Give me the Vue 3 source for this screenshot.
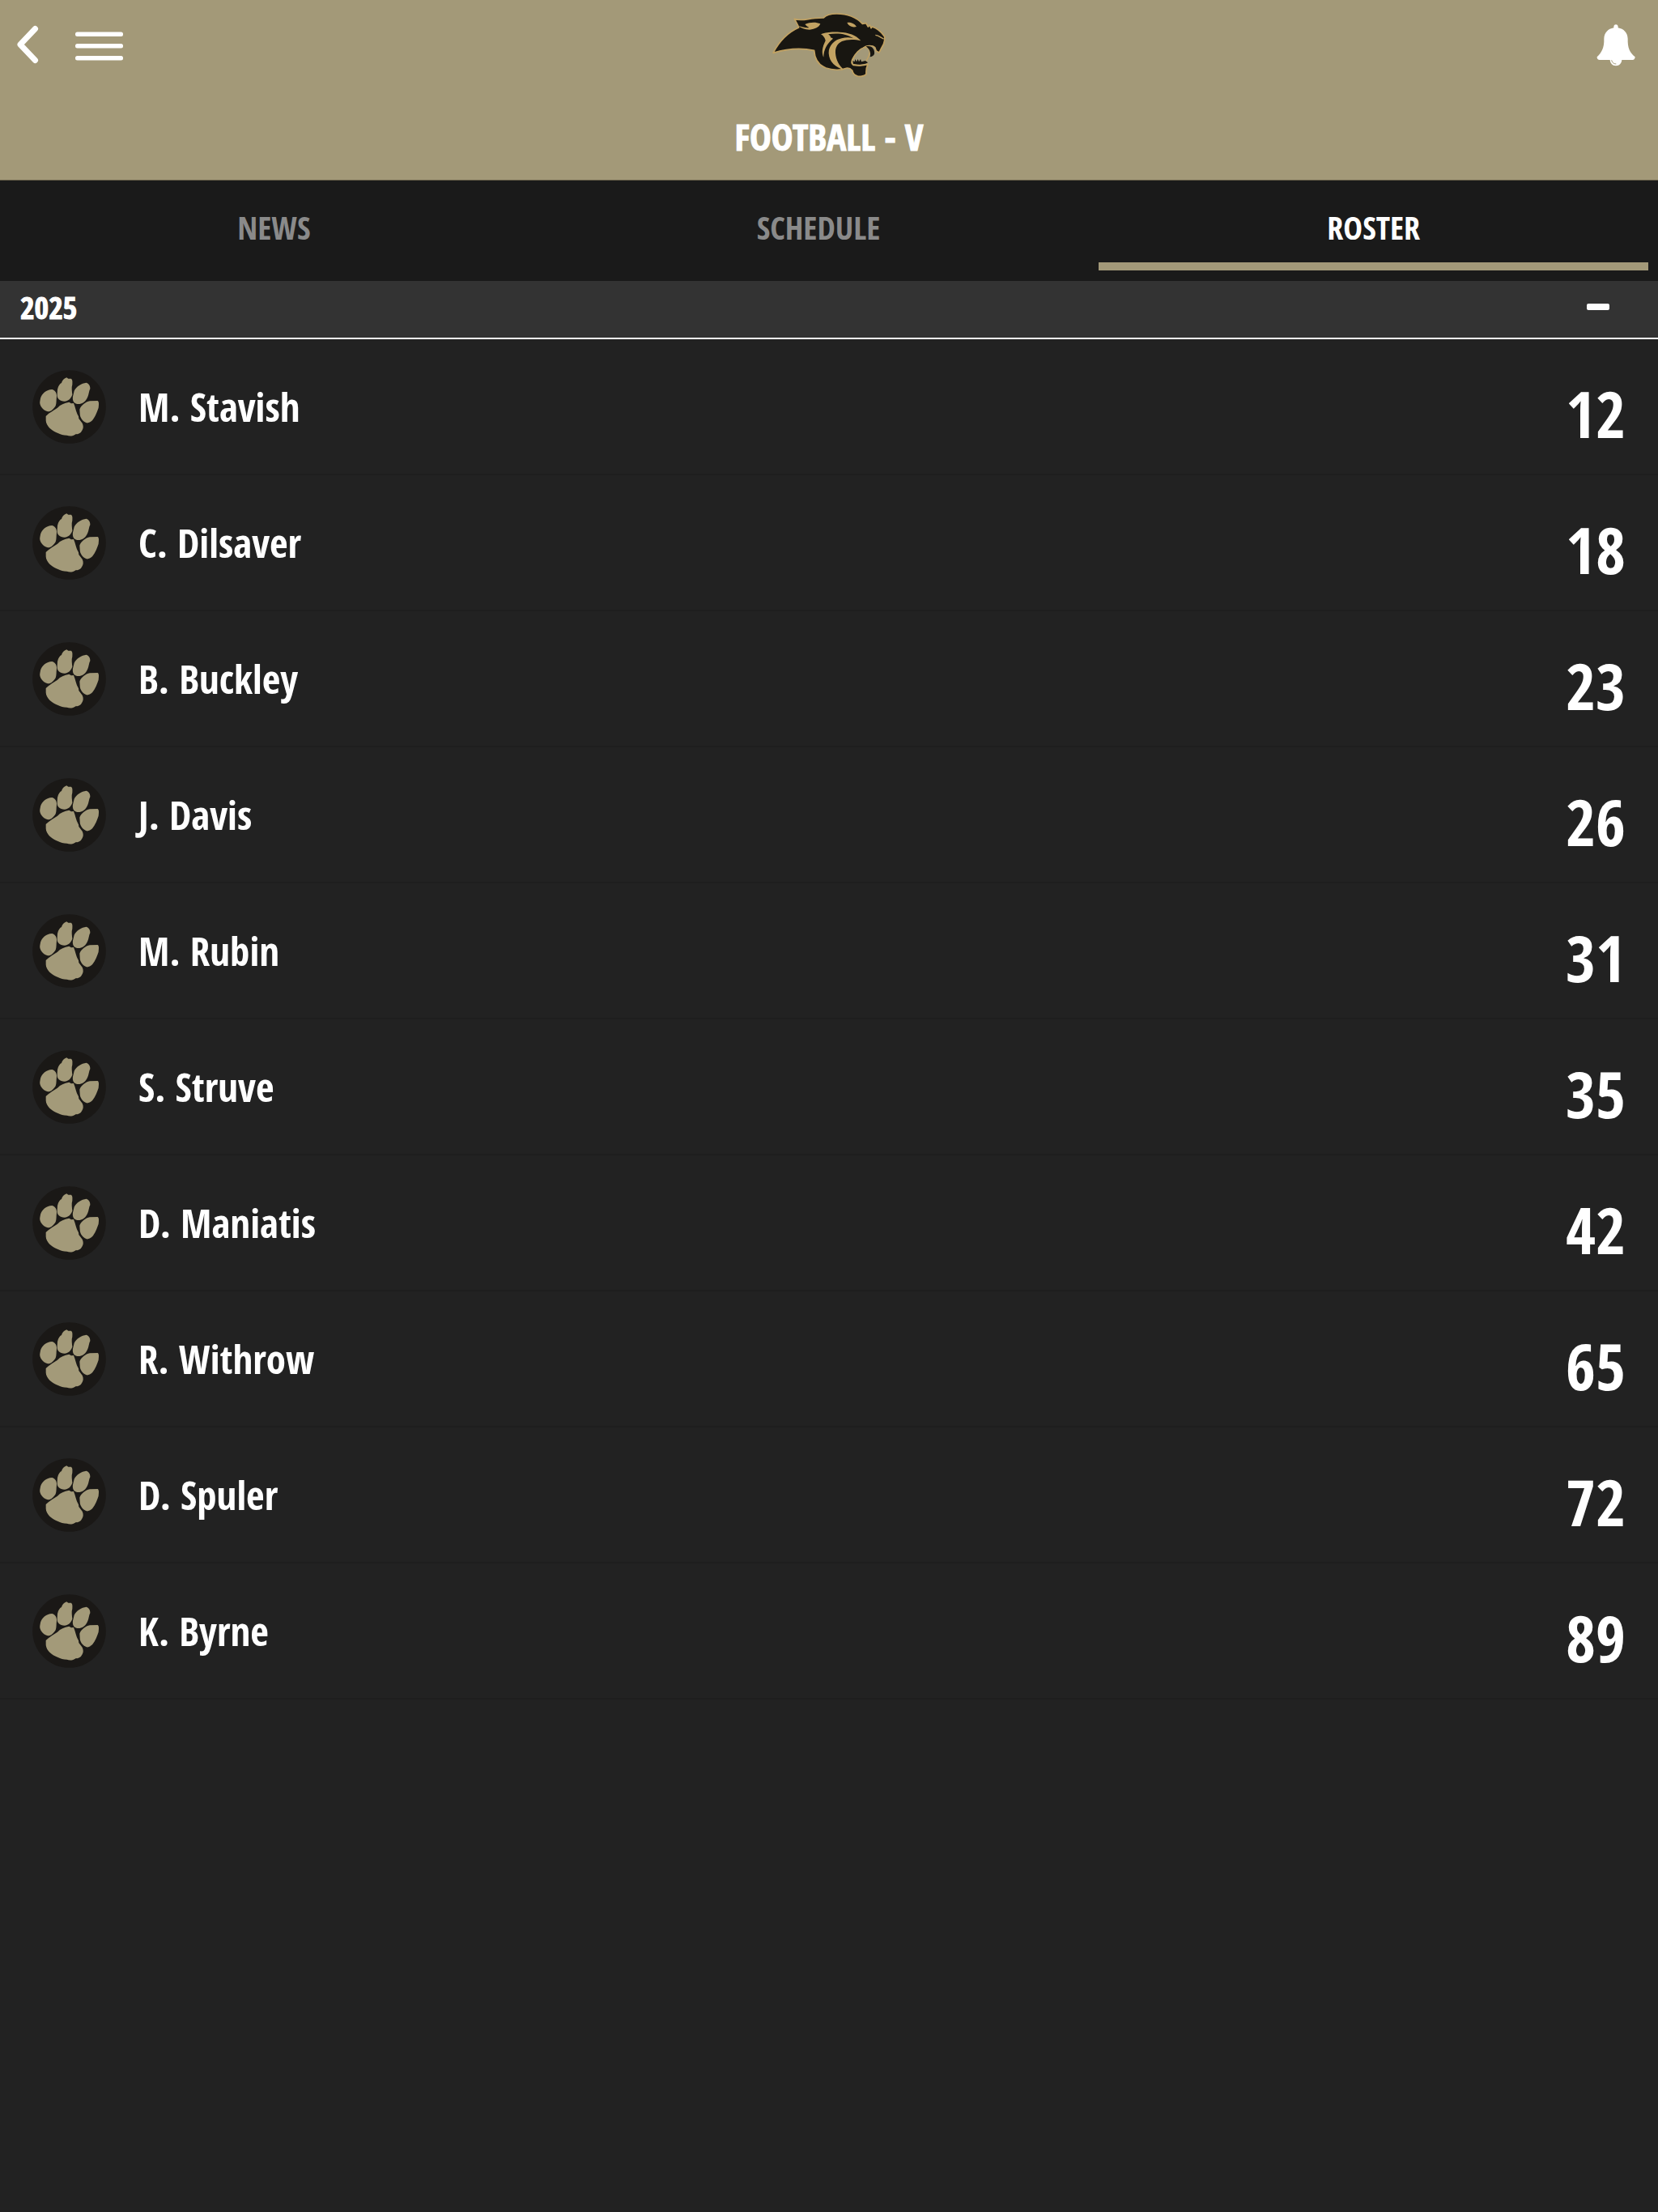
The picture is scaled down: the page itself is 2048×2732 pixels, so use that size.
<script setup>
import { ref } from 'vue'

const tabs = ['News', 'Schedule', 'Roster']
const activeTab = ref('Roster')
const open = ref(true)

const players = [
  { name: 'M. Stavish', number: 12 },
  { name: 'C. Dilsaver', number: 18 },
  { name: 'B. Buckley', number: 23 },
  { name: 'J. Davis', number: 26 },
  { name: 'M. Rubin', number: 31 },
  { name: 'S. Struve', number: 35 },
  { name: 'D. Maniatis', number: 42 },
  { name: 'R. Withrow', number: 65 },
  { name: 'D. Spuler', number: 72 },
  { name: 'K. Byrne', number: 89 },
]
</script>

<template>
  <div class="app">
    <header class="header">
      <div class="bar">
        <div class="side">
          <button type="button" aria-label="Back">
            <svg width="28" height="48" viewBox="0 0 28 48" fill="none" stroke="#fff" stroke-width="7" stroke-linecap="round" stroke-linejoin="round">
              <path d="M23.500 4.500L5 24L23.500 43.500" />
            </svg>
          </button>
          <button type="button" aria-label="Menu">
            <svg width="60" height="42" viewBox="0 0 60 42" fill="#fff">
              <rect x="0" y="5.500" width="59" height="5.500" rx="2.500" />
              <rect x="0" y="20" width="59" height="5.500" rx="2.500" />
              <rect x="0" y="35" width="59" height="5.500" rx="2.500" />
            </svg>
          </button>
        </div>
        <svg class="logo" viewBox="40 42 426 246" role="img" aria-label="Panthers">
          <path
            fill="#181611" stroke="#c2a262" stroke-width="5" stroke-linejoin="round"
            d="M46 196C66 158 96 122 141 102C137 90 130 80 125 70C140 76 158 74 176 71C198 66 216 66 233 66C242 55 258 51 282 51C316 51 350 60 377 88L390 86L398 99L404 93L409 104L413 99C430 105 446 117 458 134C462 144 458 153 455 164C449 175 444 184 439 195L428 189L423 176C416 168 392 166 380 178C364 190 346 204 342 216C336 226 335 236 343 241C360 243 382 243 397 238C391 250 390 262 391 275C383 283 366 285 356 281C346 278 341 270 339 261C331 252 322 250 312 254C298 261 266 260 242 252C214 241 200 222 198 187C150 177 96 181 46 196Z"
          />
          <path fill="#a39979" stroke="#c2a262" stroke-width="4" d="M343 217C348 200 366 181 383 176C398 173 403 184 403 196C401 212 394 222 387 231L370 236L342 237C338 232 339 225 343 217Z" />
          <path fill="#181611" d="M341 225L348 229L350 219L355 229L360 219L364 229L370 219L373 229L388 225L397 232C388 240 358 241 343 237ZM390 172C412 166 424 184 421 200C418 207 411 210 405 211C409 198 405 183 390 172Z" />
          <path fill="#c2a262" d="M223 127C242 119 268 118 292 119C324 120 354 130 371 151C348 145 320 145 301 153C282 163 276 178 277 197C279 221 290 244 309 258C277 251 254 229 252 198C251 171 270 151 299 139C287 132 273 129 263 133L267 144C246 162 233 184 233 212C225 197 227 177 240 151C239 141 232 132 223 127Z" />
          <path fill="#181611" d="M250 127C282 121 318 124 343 142C318 134 298 143 281 148C273 142 266 139 261 141C259 135 255 130 250 127Z" />
          <path fill="#c2a262" d="M164 90C182 82 204 81 221 88C216 101 202 108 181 110C164 110 149 104 139 96C154 100 168 104 179 102C173 99 168 95 164 90ZM320 84C331 82 347 86 355 99C340 103 327 98 320 84Z" />
          <path fill="none" stroke="#c2a262" stroke-width="4" d="M456 144C447 142 439 131 425 130M343 240C360 243 382 243 397 237" />
        </svg>
        <div class="side side-end">
          <button type="button" aria-label="Notifications">
            <svg width="48" height="54" viewBox="154 86 144 162" fill="#fff">
              <path d="M226 93C231 93 234 97 234 101L234 105C255 109 269 123 270 145C269 180 277 195 297 213C297 220 293 224 288 224H166C160 224 155 220 156 213C174 195 183 179 182 145C183 123 197 109 218 105V101C218 97 221 93 226 93Z" />
              <path d="M204 222H248C248 236 239 246 226 246C213 246 204 236 204 222Z" />
              <path d="M210 225C212 234 218 239 227 239" fill="none" stroke="#a39979" stroke-width="3" />
            </svg>
          </button>
        </div>
      </div>
      <h1 class="title">FOOTBALL - V</h1>
    </header>

    <nav class="tabs">
      <button
        v-for="tab in tabs" :key="tab" type="button" class="tab"
        :class="{ active: tab === activeTab }" @click="activeTab = tab"
      >{{ tab.toUpperCase() }}</button>
    </nav>

    <main>
      <button class="season" type="button" :aria-expanded="open" @click="open = !open">
        <span>2025</span>
        <span class="minus"></span>
      </button>
      <ul v-show="open" class="roster">
        <li v-for="player in players" :key="player.number" class="player">
          <svg class="paw" viewBox="30 35 273 273" aria-hidden="true">
            <circle cx="166.500" cy="171.500" r="136" fill="#1a1816" />
            <g fill="#a39a79">
              <path d="M123 107C126 93 133 85 138 83C140 74 148 66 157 63L163 67L174 67C180 72 178 80 178 89C174 100 177 116 178 126C173 142 162 151 149 151C132 150 120 141 122 124Z" />
              <path d="M185 112C193 95 213 84 229 82C239 84 245 94 244 105C239 114 239 130 232 141C224 156 211 163 196 161C182 158 178 147 180 133Z" />
              <path d="M60 140C65 122 82 108 103 107C115 110 121 121 120 134C118 146 120 158 116 168C108 181 98 190 87 189C69 184 55 166 58 151Z" />
              <path d="M205 181C210 166 227 153 243 150L272 149C278 153 276 165 275 175C270 189 264 207 252 222C245 228 238 232 231 231C216 225 206 211 206 196Z" />
              <path d="M80 206C91 194 110 184 123 175C134 163 148 157 166 154L174 159L183 158C190 174 191 190 201 207L202 215L215 232C220 242 219 252 213 261C208 270 200 274 192 272L187 275C176 281 166 280 158 277C145 277 135 273 123 268C100 260 81 242 80 222Z" />
            </g>
          </svg>
          <span class="name">{{ player.name }}</span>
          <span class="number">{{ player.number }}</span>
        </li>
      </ul>
    </main>
  </div>
</template>

<style>
body {
  margin: 0;
  background: #222;
}
</style>

<style scoped>
.app {
  min-height: 100vh;
  background: #222;
  color: #fff;
  font-family: "Open Sans Condensed", "Liberation Sans Narrow", "Open Sans", sans-serif;
  font-weight: 700;
}

button {
  border: 0;
  margin: 0;
  padding: 0;
  background: none;
  color: inherit;
  font: inherit;
  cursor: pointer;
}

svg {
  display: block;
}

.header {
  background: #a39978;
  border-bottom: 1px solid #665f49;
}

.bar {
  display: flex;
  align-items: center;
  justify-content: space-between;
  height: 110px;
  padding: 0 20px;
}

.side {
  display: flex;
  flex: 1;
  align-items: center;
  gap: 45px;
}

.side-end {
  justify-content: flex-end;
}

.side-end button {
  margin-right: 8px;
}

.logo {
  width: 142px;
  height: 82px;
}

.title {
  margin: 0;
  padding-top: 6px;
  font-size: 45px;
  line-height: 106px;
  text-align: center;
  -webkit-text-stroke: 1px currentColor;
}

.tabs {
  display: grid;
  grid-template-columns: repeat(3, 1fr);
  height: 124px;
  padding-right: 12px;
  background: #1a1a1a;
}

.tab {
  box-sizing: border-box;
  height: 111px;
  padding: 14px 14px 0 12px;
  border-bottom: 10px solid transparent;
  color: #8a8a8a;
  font-size: 40px;
}

.tab:nth-child(2) {
  padding-right: 26px;
}

.tab.active {
  padding-right: 12px;
  border-color: #a39979;
  color: #fff;
}

.season {
  display: flex;
  align-items: center;
  justify-content: space-between;
  width: 100%;
  padding: 0 60px 6px 25px;
  border-bottom: 2px solid #fff;
  background: #333;
  font-size: 38px;
  line-height: 64px;
}

.season span:first-child {
  -webkit-text-stroke: 1px currentColor;
}

.minus {
  width: 28px;
  height: 8px;
  border-radius: 2px;
  background: #fff;
}

.roster {
  margin: 0;
  padding: 0;
  list-style: none;
}

.player {
  display: flex;
  align-items: center;
  box-sizing: border-box;
  height: 168px;
  padding: 0 40px;
  border-bottom: 2px solid #1e1e1e;
}

.paw {
  width: 91px;
  height: 91px;
}

.name {
  flex: 1;
  margin-left: 40px;
  font-size: 49px;
}

.number {
  padding-top: 16px;
  font-size: 80px;
  line-height: 80px;
}
</style>
